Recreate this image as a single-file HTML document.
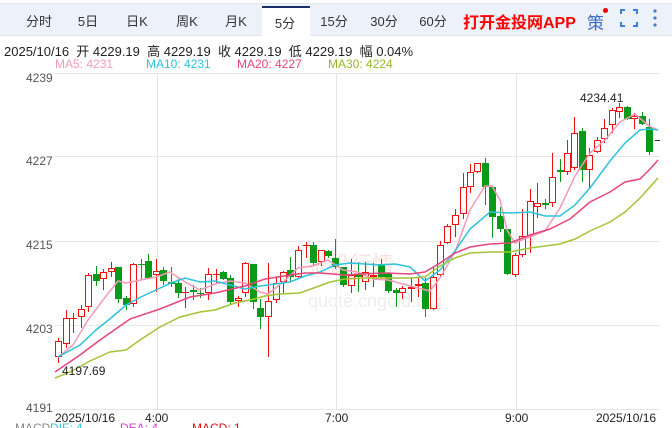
<!DOCTYPE html>
<html><head><meta charset="utf-8"><style>
body{margin:0;width:672px;height:428px;overflow:hidden;background:#fff;font-family:"Liberation Sans","Noto Sans CJK SC",sans-serif;position:relative}
.bar{position:absolute;left:0;top:3px;width:672px;height:31px;background:#edf2fa;border-top:1px solid #dfe6f0;border-bottom:1px solid #dfe6f0}
.tab{position:absolute;top:11px;font-size:13px;color:#333;transform:translateX(-50%)}
.act{position:absolute;left:262px;top:6px;width:48px;height:30px;background:#fff;border-top:2px solid #1a2f6b;box-sizing:border-box}
.t{position:absolute;white-space:nowrap}
</style></head><body>
<div class="bar"></div>
<div class="act"></div>
<div class="tab" style="left:39px">分时</div>
<div class="tab" style="left:88px">5日</div>
<div class="tab" style="left:137px">日K</div>
<div class="tab" style="left:187px">周K</div>
<div class="tab" style="left:236px">月K</div>
<div class="tab" style="left:285px;top:13px">5分</div>
<div class="tab" style="left:334px">15分</div>
<div class="tab" style="left:384px">30分</div>
<div class="tab" style="left:433px">60分</div>
<div class="t" style="left:463px;top:9px;font-size:16px;font-weight:bold;color:#f00">打开金投网APP</div>
<div class="t" style="left:587px;top:9px;font-size:17px;color:#3d6fc0">策</div>
<div class="t" style="left:603px;top:8px;width:5px;height:5px;border-radius:50%;background:#e00"></div>
<svg style="position:absolute;left:620px;top:9px" width="18" height="18"><path d="M1 5V1H5M13 1H17V5M17 13V17H13M5 17H1V13" fill="none" stroke="#3d7ed8" stroke-width="2"/></svg>
<svg style="position:absolute;left:652px;top:8px" width="6" height="20"><circle cx="3" cy="3" r="1.6" fill="#3d7ed8"/><circle cx="3" cy="10" r="1.6" fill="#3d7ed8"/><circle cx="3" cy="17" r="1.6" fill="#3d7ed8"/></svg>
<div class="t" style="left:4px;top:41px;font-size:13px;color:#222">2025/10/16&nbsp; 开 4229.19&nbsp; 高 4229.19&nbsp; 收 4229.19&nbsp; 低 4229.19&nbsp; 幅 0.04%</div>
<div class="t" style="left:55px;top:57px;font-size:12px;color:#f49ab8">MA5: 4231</div>
<div class="t" style="left:146px;top:57px;font-size:12px;color:#2cc3de">MA10: 4231</div>
<div class="t" style="left:237px;top:57px;font-size:12px;color:#e8457a">MA20: 4227</div>
<div class="t" style="left:328px;top:57px;font-size:12px;color:#94b829">MA30: 4224</div>
<svg id="c" style="position:absolute;left:0;top:0" width="672" height="428"></svg>
<script>
var s='';
[73,156,241,325,409].forEach(function(y){s+='<line x1="55" x2="660" y1="'+y+'.5" y2="'+y+'.5" stroke="#e6e6e6"/>';});
[157,336,516].forEach(function(x){s+='<line y1="73" y2="410" x1="'+x+'.5" x2="'+x+'.5" stroke="#e6e6e6"/>';});
s+='<text x="350" y="272" font-size="22" fill="#f8e4e0" text-anchor="middle" font-family="Noto Sans CJK SC">金投行情</text>';
s+='<text x="375" y="307" font-size="18" fill="#eeeeee" text-anchor="middle" font-family="Liberation Sans">quote.cngold.org</text>';
[['4239',78],['4227',161],['4215',245],['4203',329],['4191',408]].forEach(function(a){s+='<text x="26" y="'+(a[1]+4)+'" font-size="12" fill="#555">'+a[0]+'</text>';});
var d=[[58,341,357,338,363,1],[66,318,344,310,348,1],[73,318,319,313,333,1],[81,309,317,305,328,1],[88,275,307,273,312,1],[96,274,281,266,286,0],[103,272,279,269,290,1],[111,268,272,262,277,1],[118,267,299,267,303,0],[126,298,305,296,310,0],[133,264,304,263,307,1],[141,264,265,259,279,0],[148,261,278,254,279,0],[156,271,275,259,292,1],[163,270,281,267,285,0],[171,282,284,267,287,0],[178,283,293,279,298,0],[185,292,293,287,308,1],[193,290,292,285,300,0],[200,293,294,288,298,0],[208,274,293,268,300,1],[216,274,275,269,283,1],[223,272,279,271,280,0],[230,278,302,275,305,0],[238,298,301,296,307,1],[245,263,293,262,297,1],[253,264,302,264,309,0],[260,308,317,299,329,0],[268,301,317,263,357,1],[276,283,300,277,303,1],[283,272,282,271,293,1],[290,270,277,257,281,0],[298,250,277,246,278,1],[306,245,246,242,258,1],[313,245,263,242,265,0],[321,250,262,250,266,1],[328,251,256,250,258,0],[335,258,267,239,269,0],[343,267,285,267,287,0],[351,275,286,259,293,1],[358,274,277,262,292,0],[365,272,282,262,290,1],[373,275,277,263,287,1],[381,264,277,259,278,0],[388,273,291,272,293,0],[396,290,293,288,307,0],[402,288,293,286,299,1],[411,287,289,278,302,1],[418,284,286,278,297,1],[425,283,309,278,317,0],[433,277,309,267,310,1],[440,245,275,241,277,1],[447,226,243,224,244,1],[455,215,225,209,237,1],[463,187,214,173,219,1],[470,172,187,164,193,1],[477,163,172,163,173,1],[485,163,187,158,205,0],[492,187,217,186,238,0],[500,216,229,207,232,0],[507,229,274,229,275,0],[515,255,275,253,277,1],[522,236,255,209,257,1],[530,201,236,189,253,1],[537,203,207,183,218,1],[545,203,205,199,209,0],[552,177,203,153,207,1],[560,170,172,159,182,0],[567,153,172,140,175,1],[574,133,168,117,170,1],[582,131,170,128,182,0],[589,155,170,148,189,1],[597,140,152,137,153,1],[604,128,139,119,143,1],[612,110,125,108,133,1],[619,107,112,103,118,1],[627,107,119,106,120,0],[634,116,119,113,129,1],[642,116,124,112,125,0],[649,127,152,119,155,0]];
d.forEach(function(c){var col=c[5]?'#f01010':'#0a9a1a';var h=Math.max(1,c[2]-c[1]);
s+='<line x1="'+(c[0]+.5)+'" x2="'+(c[0]+.5)+'" y1="'+c[3]+'" y2="'+c[4]+'" stroke="'+col+'"/>';
if(c[5]&&h>2)s+='<rect x="'+(c[0]-2.5)+'" y="'+(c[1]+.5)+'" width="6" height="'+(h-1)+'" fill="#fff" stroke="'+col+'"/>';
else s+='<rect x="'+(c[0]-3)+'" y="'+c[1]+'" width="7" height="'+h+'" fill="'+col+'"/>';});
function pl(p,c){s+='<polyline fill="none" stroke="'+c+'" stroke-width="1.5" points="'+p+'"/>';}
pl('58,357 73,345 88,320 103,300 118,281 126,283 141,280 156,277 170,272 185,282 200,290 215,284 230,281 245,283 260,292 268,294 283,282 298,268 313,266 328,260 343,270 358,272 373,279 388,280 403,284 418,288 430,291 440,278 455,252 470,210 485,186 492,186 500,200 507,230 515,243 522,240 545,231 560,208 575,176 590,153 605,140 620,122 635,114 649,126 658,130','#f49ab8');
pl('58,357 80,345 96,330 111,318 126,305 141,297 156,290 171,283 185,278 200,282 215,281 230,285 245,289 260,286 275,284 290,282 305,276 320,272 335,265 350,263 365,264 380,265 395,264 410,267 425,281 440,270 455,251 470,229 490,212 510,213 530,212 545,216 560,216 575,205 590,188 610,161 625,143 640,130 650,129 658,130','#2cc3de');
pl('55,372 80,355 100,340 130,319 160,309 190,297 215,293 245,286 265,279 290,275 305,273 320,273 345,275 360,274 385,273 410,274 425,272 440,263 455,253 470,247 490,244 510,243 530,235 550,229 570,219 590,202 610,192 625,182 640,179 652,167 658,160','#e8457a');
pl('55,378 70,372 90,361 110,352 126,350 140,340 160,327 180,317 200,312 215,310 235,303 250,300 265,296 280,294 300,293 330,282 345,279 365,278 380,278 410,278 425,277 440,266 455,258 470,253 490,252 510,252 530,248 545,246 560,244 575,239 590,231 610,222 625,212 640,198 658,178','#a3c435');
s+='<line x1="655" x2="660" y1="140.5" y2="140.5" stroke="#333"/>';
s+='<text x="580" y="102" font-size="12" fill="#222">4234.41</text><text x="62" y="375" font-size="12" fill="#222">4197.69</text>';
[['2025/10/16',55],['4:00',145],['7:00',325],['9:00',505],['2025/10/16',596]].forEach(function(a){s+='<text x="'+a[1]+'" y="422" font-size="12" fill="#222">'+a[0]+'</text>';});
s+='<text x="15" y="432" font-size="12" fill="#888">MACD</text><text x="50" y="432" font-size="12" fill="#2cc3de">DIF: 4</text><text x="120" y="432" font-size="12" fill="#d040d0">DEA: 4</text><text x="192" y="432" font-size="12" fill="#e01010">MACD: 1</text>';
document.getElementById('c').innerHTML=s;
</script>
</body></html>
